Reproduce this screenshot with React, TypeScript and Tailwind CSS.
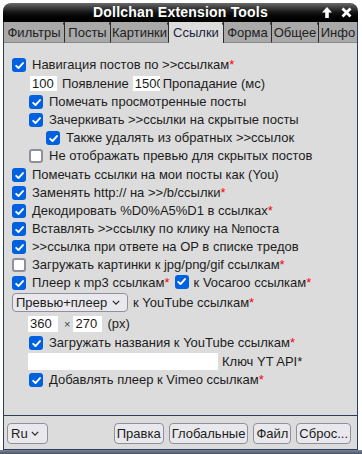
import * as React from 'react'

const Star = () => <span className="text-[#ff0000]">*</span>

function Check({ on = true }: { on?: boolean }) {
  if (!on) {
    return (
      <span className="h-[14px] w-[14px] shrink-0 rounded-[3px] border-2 border-[#8f8f9d] bg-white" />
    )
  }
  return (
    <span className="inline-flex h-[14px] w-[14px] shrink-0 items-center justify-center rounded-[3px] bg-[#0061e0]">
      <svg viewBox="0 0 12 12" className="h-[11px] w-[11px]">
        <path
          d="M2.4 6.4 4.9 8.8 9.8 3.3"
          fill="none"
          stroke="white"
          strokeWidth="2.1"
          strokeLinecap="round"
          strokeLinejoin="round"
        />
      </svg>
    </span>
  )
}

function Row({
  level = 0,
  on = true,
  children,
}: {
  level?: number
  on?: boolean
  children: React.ReactNode
}) {
  const pad = level === 0 ? 'pl-[8px]' : level === 1 ? 'pl-[25px]' : 'pl-[42px]'
  return (
    <div className={`flex h-[18px] items-center gap-[6px] whitespace-nowrap ${pad}`}>
      <Check on={on} />
      <span>{children}</span>
    </div>
  )
}

const tabs = [
  { name: 'Фильтры', w: 'w-[61px]' },
  { name: 'Посты', w: 'w-[46px]' },
  { name: 'Картинки', w: 'w-[58px]' },
  { name: 'Ссылки', w: 'w-[55px]', active: true },
  { name: 'Форма', w: 'w-[48px]' },
  { name: 'Общее', w: 'w-[47px]' },
  { name: 'Инфо', w: 'flex-1' },
]

function Chevron() {
  return (
    <svg viewBox="0 0 10 6" className="h-[5px] w-[8px]">
      <path d="M1 1 5 5 9 1" fill="none" stroke="#222" strokeWidth="1.4" />
    </svg>
  )
}

export default function App() {
  return (
    <div className="h-[454px] w-[362px] bg-white font-['Liberation_Sans',Arial,sans-serif] text-[13px] text-[#1c1c1c]">
      <div className="pl-[3px] pr-[4px] pt-[3px]">
        {/* title bar */}
        <div className="relative flex h-[19px] items-center justify-center rounded-t-[8px] bg-gradient-to-b from-[#6a6a6a] via-[#151515] to-[#000] text-[14px] font-bold text-white">
          <span className="tracking-[0.2px]">Dollchan Extension Tools</span>
          <div className="absolute right-[6px] top-[4px] flex items-center gap-[9px]">
            <svg viewBox="0 0 10 11" className="h-[11px] w-[10px]">
              <path d="M5 0 10 5.5H6.8V11H3.2V5.5H0Z" fill="white" />
            </svg>
            <svg viewBox="0 0 11 11" className="h-[11px] w-[11px]">
              <path d="M1.5 1.5 9.5 9.5M9.5 1.5 1.5 9.5" stroke="white" strokeWidth="2.8" />
            </svg>
          </div>
        </div>

        <div className="border-x border-b border-[#2e3d5c]">
          {/* tabs */}
          <div className="flex h-[21px] bg-black">
            {tabs.map((t, i) => (
              <div
                key={t.name}
                className={`relative flex items-center justify-center leading-[21px] ${t.w} ${
                  i < tabs.length - 1 ? 'border-r border-[#2a2a2a]' : ''
                } ${
                  t.active
                    ? 'bg-[#dcdcdc] text-[#1a2640]'
                    : 'border-b border-b-[#8a8a8a] bg-[#a9a9a9] text-[#222]'
                }`}
              >
                {t.name}
                {i < tabs.length - 1 && (
                  <span className="absolute -right-[2px] top-0 h-[3px] w-[3px] rounded-full bg-[#2a2a2a]" />
                )}
              </div>
            ))}
          </div>

          {/* content */}
          <div className="h-[372px] bg-[#dcdcdc] pt-[13px]">
            <Row>
              Навигация постов по &gt;&gt;ссылкам
              <Star />
            </Row>
            <div className="flex h-[19px] items-center whitespace-nowrap pl-[26px]">
              <input
                defaultValue="100"
                className="h-[15px] w-[27px] bg-white pl-[2px] text-[13px] leading-[15px] outline-none"
              />
              <span className="ml-[5px]">Появление</span>
              <input
                defaultValue="1500"
                className="ml-[4px] h-[15px] w-[27px] bg-white pl-[2px] text-[13px] leading-[15px] outline-none"
              />
              <span className="ml-[3px]">Пропадание (мс)</span>
            </div>
            <Row level={1}>Помечать просмотренные посты</Row>
            <Row level={1}>Зачеркивать &gt;&gt;ссылки на скрытые посты</Row>
            <Row level={2}>Также удалять из обратных &gt;&gt;ссылок</Row>
            <Row level={1} on={false}>
              Не отображать превью для скрытых постов
            </Row>
            <div className="h-[1px]" />
            <Row>Помечать ссылки на мои посты как (You)</Row>
            <Row>
              Заменять http:// на &gt;&gt;/b/ссылки
              <Star />
            </Row>
            <Row>
              Декодировать %D0%A5%D1 в ссылках
              <Star />
            </Row>
            <Row>Вставлять &gt;&gt;ссылку по клику на №поста</Row>
            <Row>&gt;&gt;ссылка при ответе на OP в списке тредов</Row>
            <Row on={false}>
              Загружать картинки к jpg/png/gif ссылкам
              <Star />
            </Row>
            <div className="flex h-[18px] items-center whitespace-nowrap pl-[8px]">
              <Check />
              <span className="ml-[6px]">
                Плеер к mp3 ссылкам
                <Star />
              </span>
              <span className="ml-[5px]">
                <Check />
              </span>
              <span className="ml-[5px]">
                к Vocaroo ссылкам
                <Star />
              </span>
            </div>
            <div className="flex h-[22px] items-center whitespace-nowrap pl-[8px]">
              <div className="relative">
                <select className="h-[19px] w-[116px] appearance-none rounded-[4px] border border-[#8f8f9d] bg-[#e9e9ed] pl-[3px] text-[13px] leading-[17px] outline-none">
                  <option>Превью+плеер</option>
                </select>
                <span className="pointer-events-none absolute right-[8px] top-[7px] flex">
                  <Chevron />
                </span>
              </div>
              <span className="ml-[5px]">
                к YouTube ссылкам
                <Star />
              </span>
            </div>
            <div className="flex h-[20px] items-center whitespace-nowrap pl-[24px]">
              <input
                defaultValue="360"
                className="h-[16px] w-[30px] bg-white pl-[2px] text-[13px] leading-[16px] outline-none"
              />
              <span className="ml-[6px] text-[11px] text-[#444]">×</span>
              <input
                defaultValue="270"
                className="ml-[3px] h-[16px] w-[29px] bg-white pl-[2px] text-[13px] leading-[16px] outline-none"
              />
              <span className="ml-[5px]">(px)</span>
            </div>
            <Row level={1}>
              Загружать названия к YouTube ссылкам
              <Star />
            </Row>
            <div className="flex h-[19px] items-center whitespace-nowrap pl-[24px]">
              <input className="h-[17px] w-[190px] bg-white outline-none" />
              <span className="ml-[4px]">Ключ YT API*</span>
            </div>
            <Row level={1}>
              Добавлять плеер к Vimeo ссылкам
              <Star />
            </Row>
          </div>

          {/* footer */}
          <div className="flex h-[34px] items-start border-t border-[#2e3d5c] bg-[#dcdcdc] pl-[3px] pr-[6px] pt-[7px]">
            <div className="relative">
              <select className="h-[21px] w-[41px] appearance-none rounded-[4px] border border-[#8f8f9d] bg-[#e9e9ed] pl-[3px] text-[13px] outline-none">
                <option>Ru</option>
              </select>
              <span className="pointer-events-none absolute right-[9px] top-[8px] flex">
                <Chevron />
              </span>
            </div>
            <div className="ml-auto flex gap-[5px]">
              {['Правка', 'Глобальные', 'Файл', 'Сброс...'].map((b) => (
                <button
                  key={b}
                  className="h-[21px] rounded-[4px] border border-[#8f8f9d] bg-[#e9e9ed] px-[2px] text-[13px] leading-[19px]"
                >
                  {b}
                </button>
              ))}
            </div>
          </div>
        </div>
      </div>
      <div className="mt-[0px] h-[4px] bg-gradient-to-b from-[#7d8696] to-[#4b5466]" />
    </div>
  )
}
